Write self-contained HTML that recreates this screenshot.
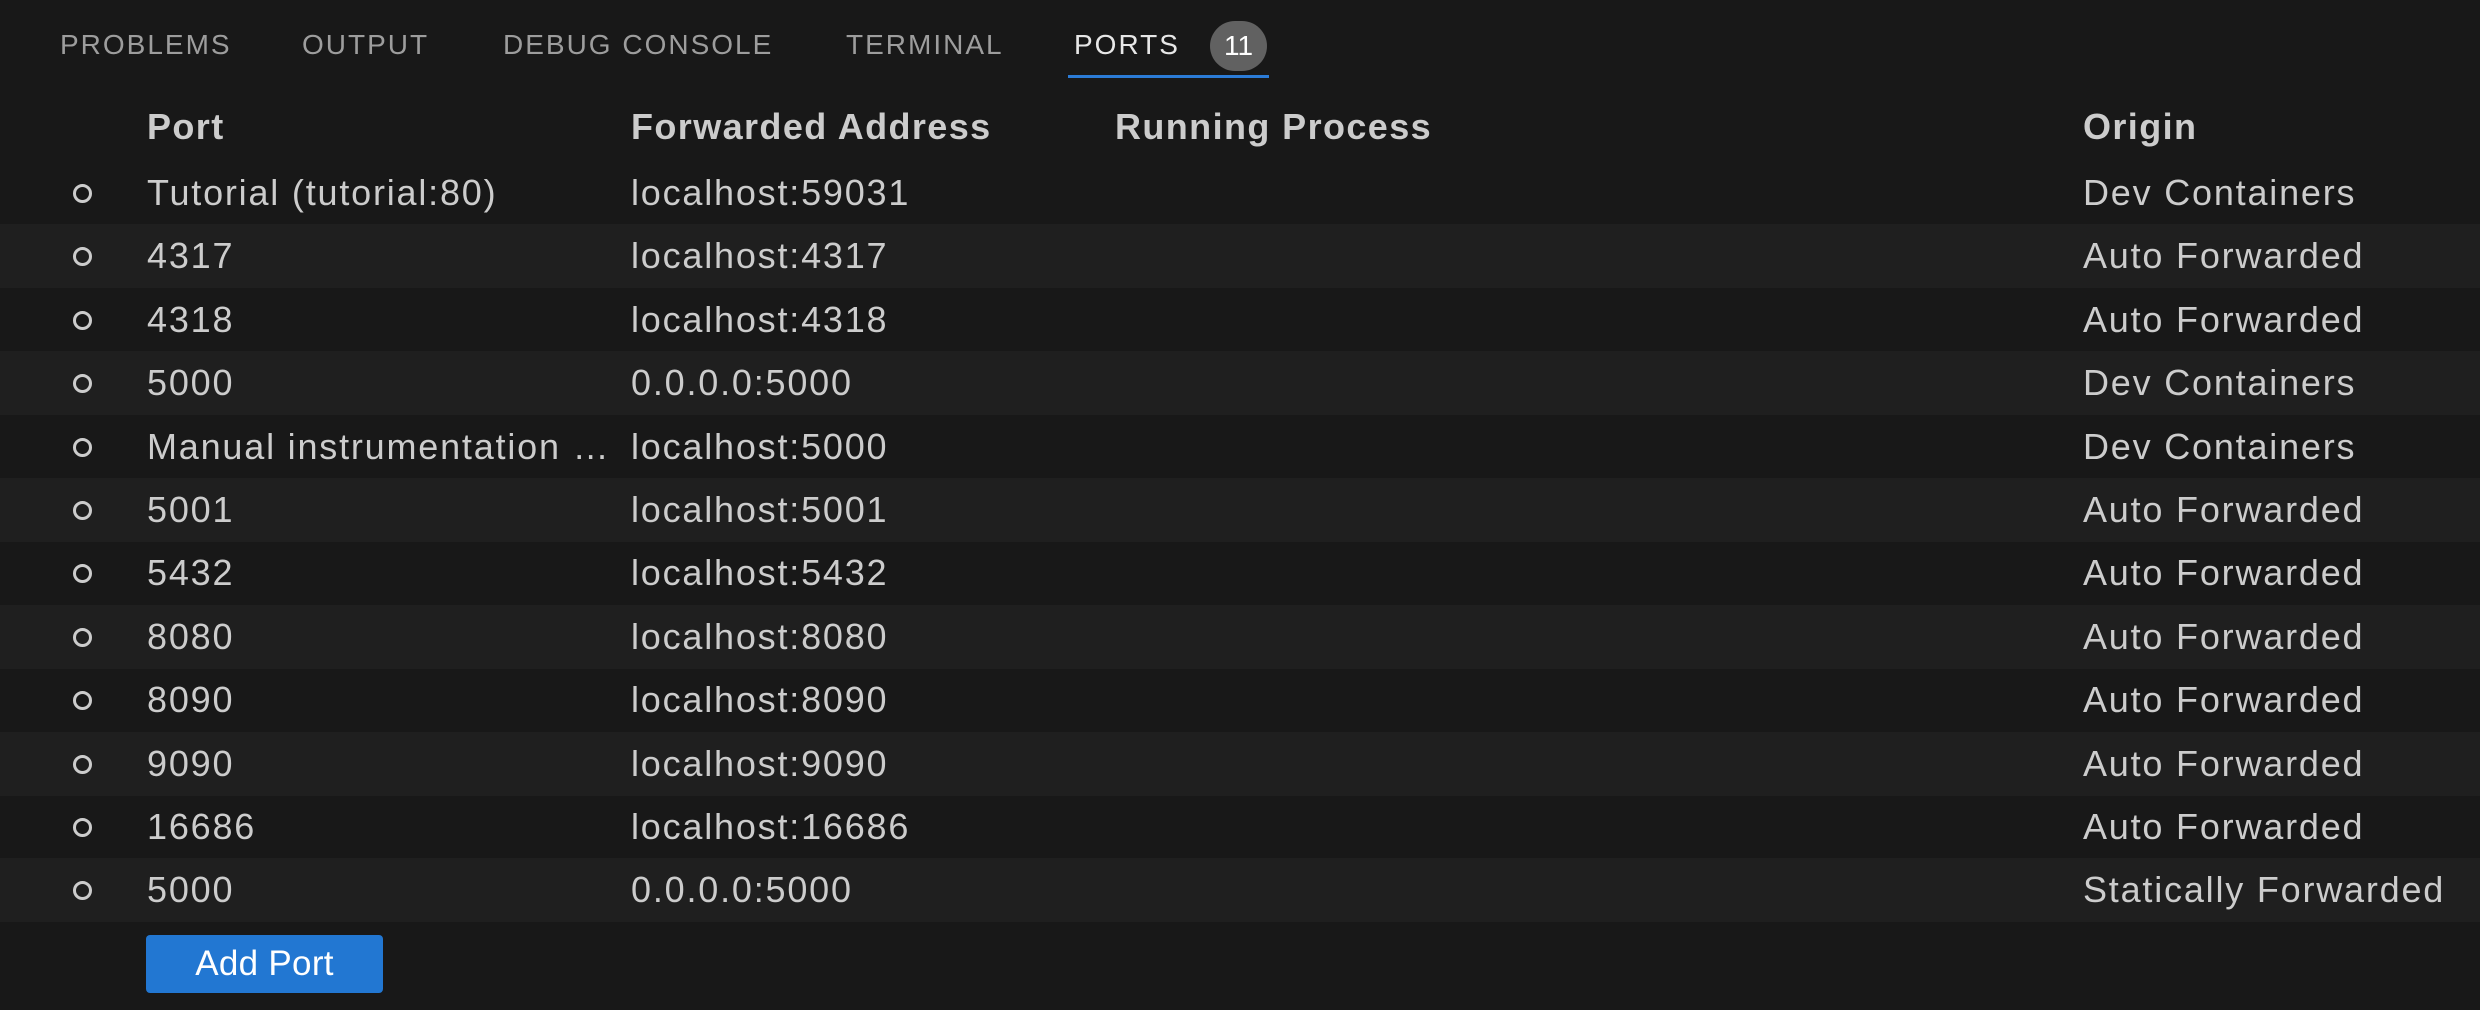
<!DOCTYPE html>
<html><head><meta charset="utf-8"><style>
*{margin:0;padding:0;box-sizing:border-box}
body{width:2480px;height:1010px;background:#181818;font-family:"Liberation Sans",sans-serif;color:#cccccc;position:relative;overflow:hidden}
.tab{position:absolute;top:28px;font-size:28px;letter-spacing:2px;color:#9d9d9d;line-height:34px}
.tab.act{color:#e7e7e7}
.badge{position:absolute;left:1210px;top:21px;width:57px;height:50px;border-radius:25px;background:#616161;color:#fff;font-size:28px;line-height:50px;text-align:center}
.ul{position:absolute;left:1068px;top:75px;width:201px;height:3px;background:#2b7bd6}
.h{position:absolute;top:106px;font-weight:bold;font-size:36px;letter-spacing:1.4px;color:#cccccc;line-height:42px}
.row{position:absolute;left:0;width:2480px;height:64px;font-size:36px;letter-spacing:1.8px;line-height:64px}
.row.s{background:#1f1f1f}
.row span{position:absolute;top:0}
.c{position:absolute;left:73px;top:23px;width:19px;height:19px;border:3px solid #cccccc;border-radius:50%}
.btn{position:absolute;left:146px;top:935px;width:237px;height:58px;background:#2277d2;border-radius:4px;color:#fff;font-size:35px;line-height:58px;text-align:center;letter-spacing:0.3px}
</style></head><body>
<div class="tab" style="left:60px">PROBLEMS</div>
<div class="tab" style="left:302px">OUTPUT</div>
<div class="tab" style="left:503px">DEBUG CONSOLE</div>
<div class="tab" style="left:846px">TERMINAL</div>
<div class="tab act" style="left:1074px">PORTS</div>
<div class="badge">11</div>
<div class="ul"></div>
<div class="h" style="left:147px">Port</div>
<div class="h" style="left:631px">Forwarded Address</div>
<div class="h" style="left:1115px">Running Process</div>
<div class="h" style="left:2083px">Origin</div>

<div class="row" style="top:161px"><div class="c"></div><span style="left:147px">Tutorial (tutorial:80)</span><span style="left:631px">localhost:59031</span><span style="left:2083px">Dev Containers</span></div>
<div class="row s" style="top:224px"><div class="c"></div><span style="left:147px">4317</span><span style="left:631px">localhost:4317</span><span style="left:2083px">Auto Forwarded</span></div>
<div class="row" style="top:288px"><div class="c"></div><span style="left:147px">4318</span><span style="left:631px">localhost:4318</span><span style="left:2083px">Auto Forwarded</span></div>
<div class="row s" style="top:351px"><div class="c"></div><span style="left:147px">5000</span><span style="left:631px">0.0.0.0:5000</span><span style="left:2083px">Dev Containers</span></div>
<div class="row" style="top:415px"><div class="c"></div><span style="left:147px">Manual instrumentation …</span><span style="left:631px">localhost:5000</span><span style="left:2083px">Dev Containers</span></div>
<div class="row s" style="top:478px"><div class="c"></div><span style="left:147px">5001</span><span style="left:631px">localhost:5001</span><span style="left:2083px">Auto Forwarded</span></div>
<div class="row" style="top:541px"><div class="c"></div><span style="left:147px">5432</span><span style="left:631px">localhost:5432</span><span style="left:2083px">Auto Forwarded</span></div>
<div class="row s" style="top:605px"><div class="c"></div><span style="left:147px">8080</span><span style="left:631px">localhost:8080</span><span style="left:2083px">Auto Forwarded</span></div>
<div class="row" style="top:668px"><div class="c"></div><span style="left:147px">8090</span><span style="left:631px">localhost:8090</span><span style="left:2083px">Auto Forwarded</span></div>
<div class="row s" style="top:732px"><div class="c"></div><span style="left:147px">9090</span><span style="left:631px">localhost:9090</span><span style="left:2083px">Auto Forwarded</span></div>
<div class="row" style="top:795px"><div class="c"></div><span style="left:147px">16686</span><span style="left:631px">localhost:16686</span><span style="left:2083px">Auto Forwarded</span></div>
<div class="row s" style="top:858px"><div class="c"></div><span style="left:147px">5000</span><span style="left:631px">0.0.0.0:5000</span><span style="left:2083px">Statically Forwarded</span></div>
<div class="btn">Add Port</div>
</body></html>
